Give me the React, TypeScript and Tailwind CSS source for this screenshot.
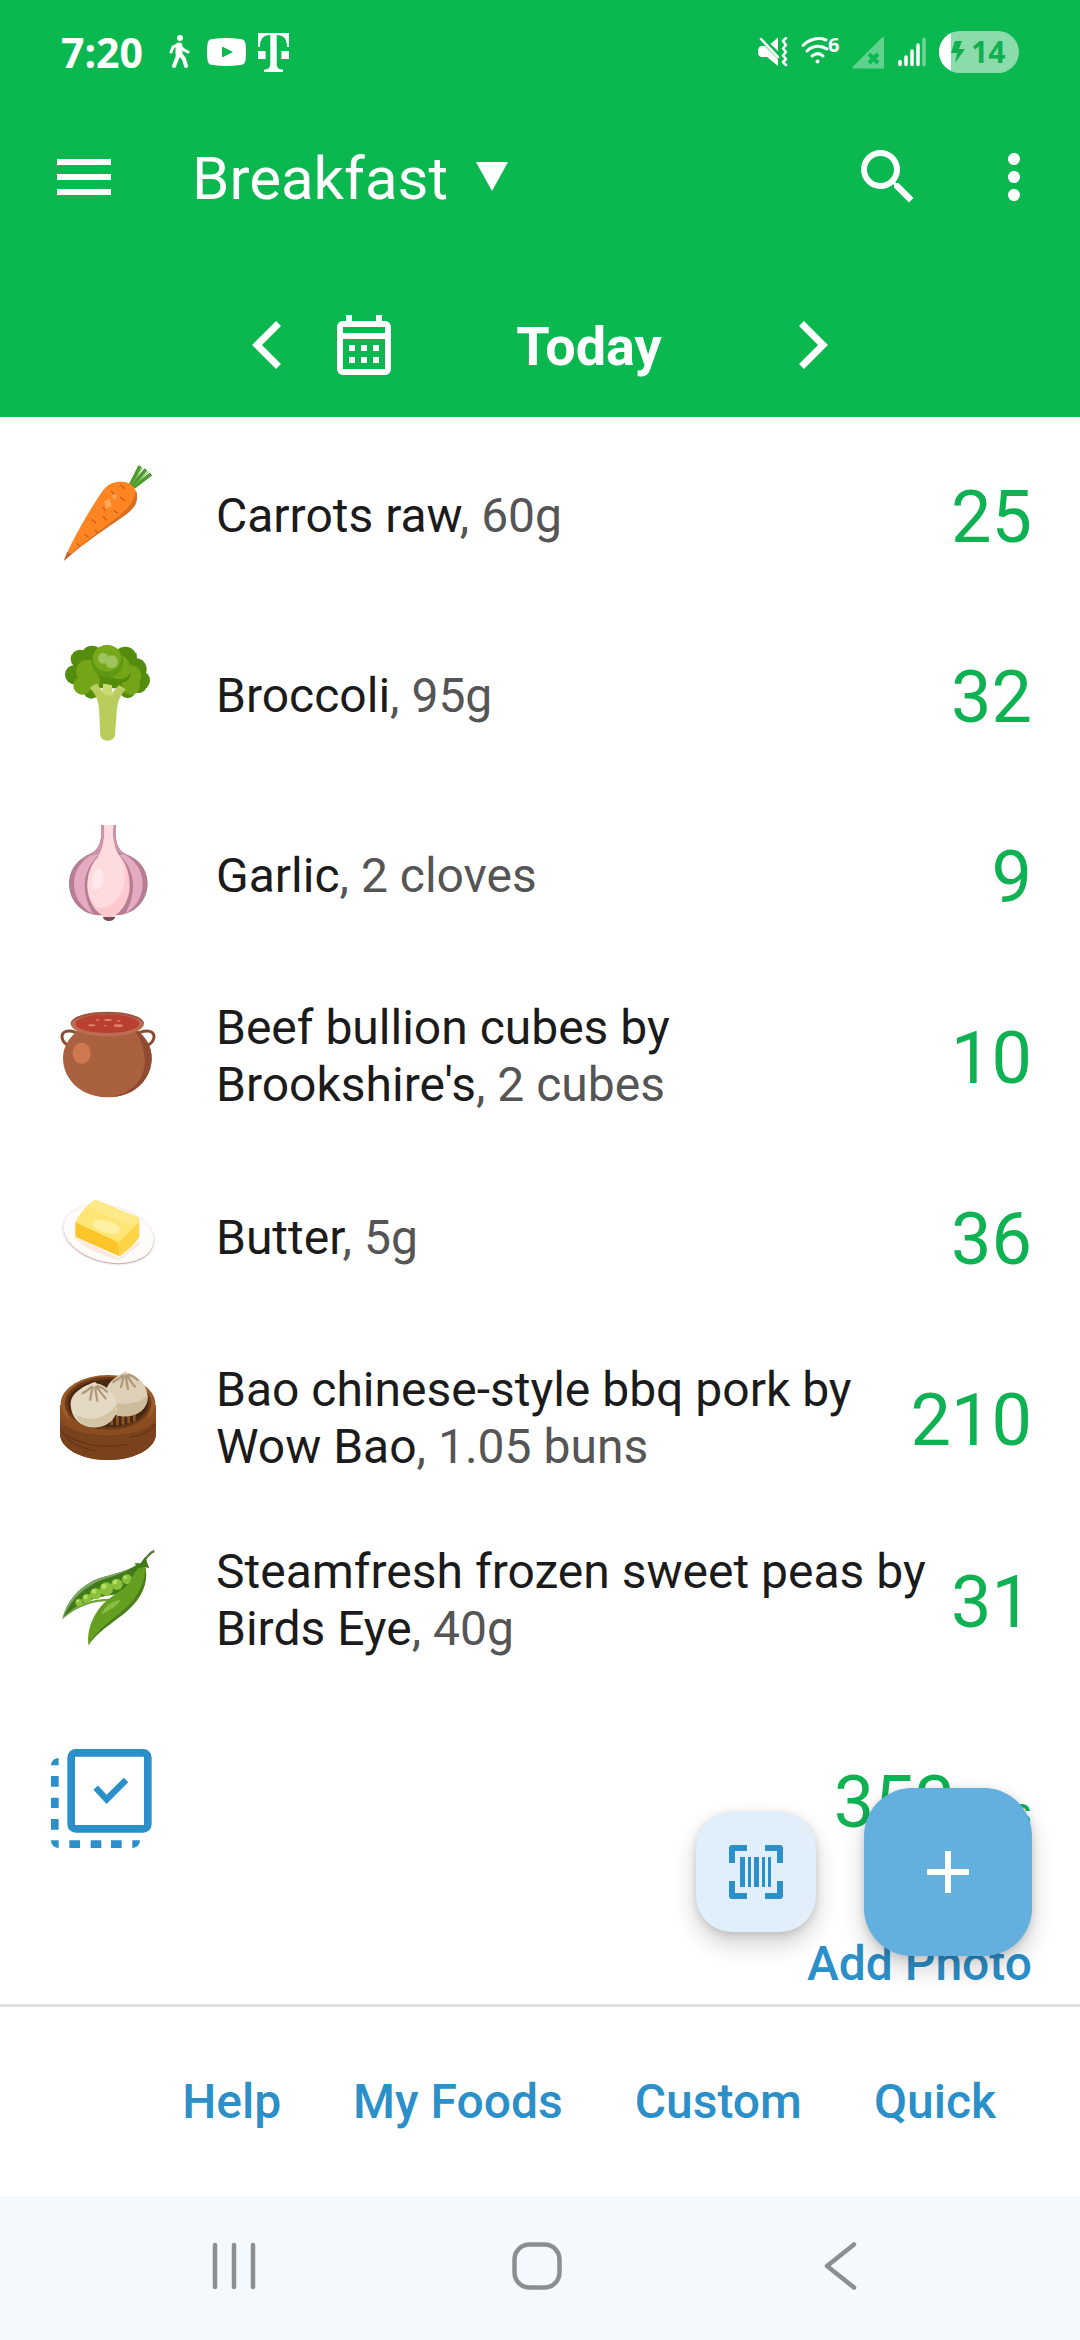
import type { ReactNode } from "react";
import {
  MdMenu,
  MdMoreVert,
  MdOutlineCalendarMonth,
  MdSearch,
} from "react-icons/md";

const Carrot = () => (
  <svg className="w-24 h-24" viewBox="90 75 288 288" fill="none">
    <path d="M300 138 330 78M306 138 348 88M311 142 363 102" stroke="#4f9a2c" strokeWidth="11" />
    <path d="M306 134 337 82M312 137 356 94" stroke="#71b94a" strokeWidth="3" />
    <path d="M102 362C120 310 190 190 222 148c15-19 32-24 56-23 28 1 45 24 43 50-2 22-22 38-48 56C220 266 150 318 102 362Z" fill="#ff8522" />
    <path d="M102 362c45-46 110-90 152-124 40-32 55-48 64-86 6 18 3 38-7 50-12 16-40 34-58 46-50 35-100 68-151 114Z" fill="#d96d20" />
    <path d="M102 362 112 335l13 8Z" fill="#b96a35" />
    <path d="m222 184 18-8 5 22-16 10ZM246 166l12-4 2 12-10 6Z" fill="#ffa657" />
    <path d="m270 134 16 12M243 153l10 10M271 171l14 12M216 200l11 13M251 212l13 8M186 238l12 12M219 229l11 11M163 282l13 10M193 270l10 8M140 310l8 8" stroke="#c9621c" strokeWidth="4" />
  </svg>
);

const Broccoli = () => (
  <svg className="w-24 h-24" viewBox="90 615 288 288">
    <g fill="#548c0c">
      <circle cx="134" cy="704" r="29" />
      <circle cx="150" cy="657" r="28" />
      <circle cx="186" cy="650" r="33" />
      <circle cx="286" cy="654" r="34" />
      <circle cx="318" cy="687" r="32" />
      <circle cx="331" cy="721" r="29" />
      <circle cx="326" cy="735" r="24" />
      <circle cx="293" cy="750" r="24" />
      <circle cx="184" cy="752" r="24" />
      <path d="M150 640H320V745H150Z" />
    </g>
    <g fill="#74a418">
      <circle cx="172" cy="693" r="34" />
      <circle cx="157" cy="737" r="27" />
      <circle cx="304" cy="706" r="30" />
      <circle cx="303" cy="738" r="27" />
      <circle cx="185" cy="725" r="26" />
      <circle cx="262" cy="682" r="38" />
    </g>
    <circle cx="232" cy="664" r="48" fill="#5f9612" />
    <ellipse cx="231" cy="655" rx="42" ry="40" fill="#78a81b" />
    <path d="M245 712c28 12 48 3 58-16 0 28-24 40-58 28Z" fill="#548c0c" />
    <circle cx="220" cy="655" r="16" fill="#9fc45f" />
    <circle cx="245" cy="665" r="19" fill="#9fc45f" />
    <path d="m179 743 21-13 17 25 3-24 26 5-1 24 22-25 20 13c-17 20-25 38-27 70l-5 67c-1 10-10 17-22 17s-22-7-22-17l-4-80c-2-27-12-45-28-62Z" fill="#b8cd5b" />
    <path d="m200 730 17 25 3-24 26 5-1 24 16-18c-8 14-13 19-14 28-7-5-12-6-18-2-10-11-21-21-29-38Z" fill="#c9db75" />
  </svg>
);

const Garlic = () => (
  <svg className="w-24 h-24" viewBox="90 75 288 288">
    <path d="M218 350h38c-3 9-9 13-19 13s-16-4-19-13Z" fill="#7d4b55" />
    <path d="M213 75h45c-3 38 0 74 30 88 36 12 65 44 65 87 0 53-40 95-93 96h-48c-54 0-95-42-95-95 0-46 32-77 62-89 32-13 38-48 34-87Z" fill="#b57e93" />
    <path d="M186 163c-30 20-54 45-54 88 0 40 23 74 58 91-13-20-26-50-26-86 0-36 18-68 44-93-6-3-14-2-22 0ZM284 163c31 20 54 45 54 88 0 40-22 72-52 90 13-25 23-52 23-86 0-34-16-67-41-90 6-3 10-3 16-2Z" fill="#e3aac0" />
    <path d="M214 75h8c2 48 0 69-16 87-22 10-40 2-50 18 36-19 62-29 58-105ZM249 75h8c-3 40 0 73 33 88-18 3-30-8-38-36Z" fill="#cf94ab" />
    <path d="M222 75h28c-4 37 3 74 24 98 15 22 25 47 25 85 0 43-28 92-62 92-35 0-65-45-65-92 0-38 12-65 30-85 16-25 24-61 20-98Z" fill="#fcc9ce" />
    <path d="M222 75h28c-4 38 2 72 20 99 14 22 17 42 14 69-4 44-40 84-78 82-20-13-33-39-33-67 0-38 12-65 30-85 16-25 23-61 19-98Z" fill="#fedbdf" />
    <ellipse cx="204" cy="237" rx="17" ry="32" fill="#ffe9eb" transform="rotate(8 204 237)" />
  </svg>
);

const Pot = () => (
  <svg className="w-24 h-24" viewBox="90 615 288 288" fill="none">
    <path d="M137 694c-22-8-41-4-41 13 0 11 7 19 16 25M330 694c22-8 42-4 42 13 0 11-8 19-17 25" stroke="#8a4b31" strokeWidth="9" strokeLinecap="round" />
    <path d="M142 690h182c25 22 41 47 41 81 0 66-55 118-132 118S99 837 99 771c0-34 17-59 43-81Z" fill="#aa6140" />
    <path d="M314 690h10c25 22 41 47 41 81 0 62-48 112-117 117 64-16 96-55 96-107 0-40-13-70-30-91Z" fill="#8f4a2f" />
    <ellipse cx="155" cy="757" rx="27" ry="32" fill="#cf7850" />
    <ellipse cx="232" cy="669" rx="110" ry="37" fill="#bd6c54" />
    <path d="M122 669c0-48 220-48 220 0-20-40-200-40-220 0Z" fill="#9c5540" />
    <ellipse cx="232" cy="668" rx="96" ry="28" fill="#b93f33" />
    <g fill="#e08368">
      <ellipse cx="234" cy="657" rx="12" ry="3" />
      <ellipse cx="185" cy="673" rx="11" ry="3" />
      <ellipse cx="265" cy="674" rx="14" ry="4" />
      <ellipse cx="203" cy="657" rx="6" ry="2" />
      <ellipse cx="226" cy="674" rx="5" ry="2" />
      <ellipse cx="266" cy="660" rx="6" ry="2" />
    </g>
  </svg>
);

const Butter = () => (
  <svg className="w-24 h-24" viewBox="90 51 288 288">
    <ellipse cx="235" cy="194" rx="144" ry="89" fill="#f3f1f5" transform="rotate(13 235 194)" />
    <ellipse cx="236" cy="195" rx="137" ry="84" fill="#cfa9a5" transform="rotate(13 236 195)" />
    <ellipse cx="236" cy="192" rx="137" ry="84" fill="#fefbfb" transform="rotate(13 236 192)" />
    <path d="m134 200 135 64 63-55-5 17-57 45c-48-14-112-34-136-71Z" fill="#fbe9df" />
    <path d="m136 156 129 59 3 44-132-59Z" fill="#fdc52a" />
    <path d="m265 215 63-59v44c-14 24-38 44-60 59Z" fill="#fdd445" />
    <path d="M136 156c12-24 34-50 54-64 6-3 10-1 16 1l118 48c4 2 5 8 4 15l-63 61Z" fill="#fee575" />
    <path d="m190 92 134 48-20 29-130-58Z" fill="#feea88" />
    <ellipse cx="229" cy="170" rx="43" ry="18" fill="#fff1a3" transform="rotate(15 229 170)" />
  </svg>
);

const Bao = () => (
  <svg className="w-24 h-24" viewBox="90 594 288 288" fill="none">
    <path d="M90 705h288v86c0 44-64 79-144 79S90 835 90 791Z" fill="#8a4c20" />
    <path d="M90 752c50 58 238 58 288 0v39c0 44-64 79-144 79S90 835 90 791Z" fill="#7a421c" />
    <path d="M92 780c30 40 130 60 200 42M300 802c35-5 65-22 77-40M105 800c20 20 55 36 90 42" stroke="#5d3014" strokeWidth="3" />
    <ellipse cx="234" cy="701" rx="142" ry="86" fill="#9a5a2a" />
    <ellipse cx="234" cy="700" rx="130" ry="80" fill="#6b3a18" />
    <ellipse cx="234" cy="700" rx="121" ry="72" fill="#4b2811" />
    <path d="M110 722c25 76 220 78 248-3 2 70-80 74-124 74s-116-15-124-71Z" fill="#8a4c20" />
    <path d="M245 738v28M262 734v32M279 734v30M296 732v28M313 728v26" stroke="#8d5526" strokeWidth="8" />
    <path d="M228 660c8-28 35-42 55-54 4-3 6-1 8 3 35 8 62 38 62 72 0 36-30 58-70 58-45 0-65-35-55-79Z" fill="#ddd0b6" />
    <path d="M262 700c35 5 65-2 91-22 0 38-30 61-70 61-15 0-25-4-33-9Z" fill="#cdbc9c" />
    <path d="M122 702c0-32 35-52 66-64 5-3 8-2 11 2 36 8 62 36 62 70 0 38-31 62-70 62-40 0-69-30-69-70Z" fill="#e4d9c2" />
    <path d="M137 735c35 17 75 15 105-12 10-8 15-18 18-25 4 45-26 74-69 74-24 0-44-14-54-37Z" fill="#d3c4a6" />
    <path d="M184 651c-8 9-18 13-26 19M188 652c-3 14-7 25-7 37M196 652c1 16 4 28 6 40M201 650c5 12 16 24 26 35M203 648c12 5 20 8 28 17M277 617c-8 10-18 12-27 19M281 617c-2 14-6 24-8 34M288 617c1 16 3 28 6 40M293 616c4 12 13 24 22 34M296 614c12 4 20 9 27 16" stroke="#b09a79" strokeWidth="7" strokeLinecap="round" />
  </svg>
);

const Peas = () => (
  <svg className="w-24 h-24" viewBox="90 90 288 288" fill="none">
    <path d="M373 93c-14 3-25 21-37 38" stroke="#5c7a42" strokeWidth="7" />
    <path d="M97 298c12-50 45-92 95-117 35-16 95-22 130-48l22-2-70 90c-60 6-130 20-177 77Z" fill="#417a1a" />
    <path d="M97 298c9-45 45-92 95-117 35-16 80-20 112-38-30 23-76 28-108 45-46 24-75 56-99 110Z" fill="#7fa564" />
    <path d="M97 298c32-42 82-62 145-62l-8 7c-50 2-95 17-137 55Z" fill="#6fa342" />
    <g fill="#8bc13a">
      <circle cx="147" cy="247" r="11" />
      <circle cx="171" cy="236" r="14" />
      <circle cx="197" cy="221" r="17" />
      <circle cx="229" cy="207" r="20" />
      <circle cx="261" cy="193" r="17" />
      <circle cx="291" cy="178" r="15" />
    </g>
    <g fill="#b7dd62">
      <circle cx="144" cy="243" r="4" />
      <circle cx="167" cy="231" r="6" />
      <circle cx="192" cy="214" r="7" />
      <circle cx="222" cy="199" r="8" />
      <circle cx="255" cy="186" r="7" />
      <circle cx="286" cy="172" r="5" />
    </g>
    <path d="M176 377c-8-45 15-105 60-140 35-26 55-33 68-60 8-19 22-37 40-46 14 45-3 87-35 122-38 42-110 80-133 124Z" fill="#649f22" />
    <path d="M176 377c26-60 108-95 142-148 20-30 28-60 28-88 8 45-7 82-37 115-38 42-110 77-133 121Z" fill="#477f1a" />
    <path d="M215 284c8-25 32-42 56-44-10 20-34 30-56 44Z" fill="#87bf42" />
    <path d="m312 130 20 0 14-20 6 20 6 15-13-4-15 2Z" fill="#417a1a" />
  </svg>
);

const foods: { icon: ReactNode; name: string; amount: string; cals: number }[] = [
  { icon: <Carrot />, name: "Carrots raw", amount: "60g", cals: 25 },
  { icon: <Broccoli />, name: "Broccoli", amount: "95g", cals: 32 },
  { icon: <Garlic />, name: "Garlic", amount: "2 cloves", cals: 9 },
  { icon: <Pot />, name: "Beef bullion cubes by Brookshire's", amount: "2 cubes", cals: 10 },
  { icon: <Butter />, name: "Butter", amount: "5g", cals: 36 },
  { icon: <Bao />, name: "Bao chinese-style bbq pork by Wow Bao", amount: "1.05 buns", cals: 210 },
  { icon: <Peas />, name: "Steamfresh frozen sweet peas by Birds Eye", amount: "40g", cals: 31 },
];

const StatusBar = () => (
  <div className="flex items-center justify-between h-[104px] px-[61px] font-['Noto_Sans',sans-serif]">
    <div className="flex items-center">
      <span className="text-[41px] leading-none font-bold">7:20</span>
      <svg className="ml-[26px] w-[22px] h-[34px]" viewBox="0 0 22 34" fill="none" stroke="currentColor" strokeLinecap="round" strokeLinejoin="round">
        <circle cx="11" cy="3" r="3" fill="currentColor" stroke="none" />
        <path d="M10 11v8" strokeWidth="7" />
        <path d="M8 10 4 12 2 17M13 13l2 2 4 2" strokeWidth="3" />
        <path d="M9 21 5 31M12 20l3 4 2 7" strokeWidth="4" />
      </svg>
      <svg className="ml-4 w-[39px] h-7" viewBox="0 0 39 28">
        <path fillRule="evenodd" fill="currentColor" d="M6 1Q19 -1 33 1Q38 1 38.500 6Q39.500 14 38.500 22Q38 27 33 27Q19 29 6 27Q1 27 .5 22Q-.5 14 .5 6Q1 1 6 1ZM15 8.500V19.500L26 14Z" />
      </svg>
      <svg className="ml-3 w-[31px] h-[39px]" viewBox="0 0 31 39" fill="currentColor">
        <path d="M0 0H31V14H29C29 6 26 2 18.700 2V30c0 5 2 6.500 6.300 6.500V39H6v-2.500c4.300 0 6.300-1.500 6.300-6.500V2C5 2 2 6 2 14H0Z" />
        <path d="M0 18h7.600v8H0ZM23.400 18H31v8h-7.600Z" />
      </svg>
    </div>

    <div className="flex items-center gap-[13px]">
      <svg className="w-[30px] h-[30px]" viewBox="0 0 30 30" fill="none" stroke="currentColor" strokeWidth="2.500" strokeLinecap="round" strokeLinejoin="round">
        <path d="M4 9H7L20 22V29L9 20H4Q0 20 0 14.500Q0 9 4 9ZM20 .5V14L12.500 7Z" fill="currentColor" stroke="none" />
        <path d="M3 2 20 20" />
        <path d="M28 1l-3 3 3 4-3 3.500 3 3.500-3 3.500 3 3.500-3 3 3 3" />
      </svg>
      <svg className="w-[38px] h-[30px] overflow-visible" viewBox="0 0 38 30" fill="none" stroke="currentColor" strokeWidth="3" strokeLinecap="round">
        <path d="M2 8.500C8 2 17 0 25 3M6 14c6-6 14-6 20-2M11 19c4-3 8-3 11 0" />
        <circle cx="16.500" cy="24.500" r="2" fill="currentColor" stroke="none" />
        <text x="27" y="15" fontSize="20" fontWeight="700" fill="currentColor" stroke="none">6</text>
      </svg>
      <svg className="w-[33px] h-[33px]" viewBox="0 0 33 33" fill="none">
        <path d="M31 2V31.500H1.500Z" fill="#5fd28d" stroke="#5fd28d" strokeWidth="2" strokeLinejoin="round" />
        <path d="m17 18 9 9M26 18l-9 9" stroke="#0bb850" strokeWidth="4" />
      </svg>
      <svg className="w-7 h-[30px]" viewBox="0 0 28 30" stroke="currentColor" strokeWidth="3.500" strokeLinecap="round">
        <path d="M2 24.500v3M8 20v7.500M14 14v13.500M20 8v19.500" />
        <path d="M26 2.500v25" opacity=".4" />
      </svg>
      <div className="flex items-center w-20 h-[42px] rounded-full overflow-hidden bg-[#8bdcab] text-[#0fb04f]">
        <span className="w-3 h-full bg-white" />
        <svg className="w-[14px] h-[22px]" viewBox="0 0 14 22" fill="currentColor">
          <path d="M4 0h7L8 8h6L4 22 6 12H0Z" />
        </svg>
        <span className="ml-1.5 text-[30px] leading-none font-bold">14</span>
      </div>
    </div>
  </div>
);

const Header = () => (
  <header className="bg-[#0bb850] text-white">
    <StatusBar />
    <div className="flex items-center h-[145px] pl-12 pr-[30px] mb-6">
      <button aria-label="Menu"><MdMenu className="w-[72px] h-[72px]" /></button>
      <button className="ml-[72px] flex items-center gap-7 text-[60px] leading-none">
        <span className="pt-1">Breakfast</span>
        <svg className="w-8 h-[29px]" viewBox="0 0 32 29" fill="currentColor"><path d="M0 0H32L16 29Z" /></svg>
      </button>
      <div className="ml-auto flex gap-[54px]">
        <button aria-label="Search"><MdSearch className="w-[72px] h-[72px]" /></button>
        <button aria-label="More options"><MdMoreVert className="w-[72px] h-[72px]" /></button>
      </div>
    </div>
    <div className="flex items-center justify-center h-36">
      <button aria-label="Previous day">
        <svg className="w-[30px] h-12" viewBox="0 0 30 48" fill="none" stroke="currentColor" strokeWidth="7"><path d="M26.500 2.500 5 24 26.500 45.500" /></svg>
      </button>
      <button aria-label="Pick a date" className="ml-[46px]"><MdOutlineCalendarMonth className="w-[72px] h-[72px]" /></button>
      <h1 className="w-[378px] mr-5 pt-1 text-center text-[54px] leading-none font-bold">Today</h1>
      <button aria-label="Next day">
        <svg className="w-[30px] h-12" viewBox="0 0 30 48" fill="none" stroke="currentColor" strokeWidth="7"><path d="M3.500 2.500 25 24 3.500 45.500" /></svg>
      </button>
    </div>
  </header>
);

const App = () => {
  return (
    <div className="min-h-screen flex flex-col bg-white font-[Roboto,sans-serif] text-[#1b1b1b]">
      <Header />

      <main className="relative flex-1 pt-2.5">
        <ul>
          {foods.map((food) => (
            <li key={food.name} className="flex items-center min-h-[180px] pl-[60px] pr-12 py-8">
              <div className="shrink-0 mb-2">{food.icon}</div>
              <p className="ml-[60px] mr-4 flex-1 pb-1 text-5xl leading-[57px]">
                {food.name}
                <span className="text-[#555]">, {food.amount}</span>
              </p>
              <span className="pt-0.5 text-[72px] leading-[72px] text-[#0fb252]">{food.cals}</span>
            </li>
          ))}
        </ul>

        <div className="flex items-center justify-between pl-[51px] pr-12 pt-14">
          <button aria-label="Select all">
            <svg className="w-[101px] h-[99px]" viewBox="63 687 303 297" fill="none" stroke="#2b8fc9">
              <rect x="123.500" y="698.500" width="230" height="228" rx="14" strokeWidth="23" />
              <path d="M197 803 230 838 288 780" strokeWidth="19" />
              <path d="M63 736c0-12 10-22 23-22v22ZM63 768h23v32H63ZM63 833h23v31H63ZM63 897h23v32H63ZM63 961h23v23c-13 0-23-10-23-23ZM118 961h32v23h-32ZM182 961h32v23h-32ZM243 961h32v23h-32ZM307 961h23c0 13-10 23-23 23Z" fill="#2b8fc9" stroke="none" />
            </svg>
          </button>
          <p className="pt-2 text-[72px] leading-[72px] text-[#0fb252]">
            353<span className="text-[42px] leading-none">cals</span>
          </p>
        </div>
        <div className="flex justify-end px-12 mt-[88px] mb-3">
          <button className="text-5xl leading-[56px] font-medium text-[#2b8fc9]">Add Photo</button>
        </div>

        {/* FLOATING BUTTONS */}
        <div className="absolute right-12 bottom-12 flex items-center gap-12">
          <button aria-label="Scan barcode" className="w-[120px] h-[120px] rounded-[36px] bg-[#e0effa] flex items-center justify-center shadow-[0_12px_24px_rgba(0,0,0,0.18),0_2px_8px_rgba(0,0,0,0.14)]">
            <svg className="w-[54px] h-[54px]" viewBox="0 0 54 54" fill="#2b8fc9">
              <path d="M18 3H3V18M36 3H51V18M18 51H3V36M36 51H51V36" fill="none" stroke="#2b8fc9" strokeWidth="6" strokeLinejoin="round" />
              <path d="M11 12h5v30h-5ZM19 12h3v30h-3ZM25 12h5v30h-5ZM33 12h3v30h-3ZM39 12h3v30h-3Z" />
            </svg>
          </button>
          <button aria-label="Add food" className="w-[168px] h-[168px] rounded-[48px] bg-[#63afdd] flex items-center justify-center shadow-[0_12px_24px_rgba(0,0,0,0.18),0_2px_8px_rgba(0,0,0,0.14)]">
            <svg className="w-[42px] h-[42px]" viewBox="0 0 42 42" stroke="white" strokeWidth="6"><path d="M21 0v42M0 21h42" /></svg>
          </button>
        </div>
      </main>

      <footer>
        <div className="flex items-center justify-end gap-[72px] h-48 border-t-[3px] border-[#e0e0e0] pr-[84px] text-5xl font-medium text-[#2b8fc9]">
          <button>Help</button>
          <button>My Foods</button>
          <button>Custom</button>
          <button>Quick</button>
        </div>
        <div className="flex items-center justify-between h-36 pl-[210px] pr-[216px] pb-1 bg-[#f4f9fd] text-[#8b8f91]">
          <button aria-label="Recent apps">
            <svg className="w-12 h-12" viewBox="0 0 48 48" stroke="currentColor" strokeWidth="4.500" strokeLinecap="round"><path d="M5 3v42M24 3v42M43 3v42" /></svg>
          </button>
          <button aria-label="Home">
            <svg className="w-[50px] h-12" viewBox="0 0 50 48" fill="none" stroke="currentColor" strokeWidth="4.500"><rect x="2.500" y="2.500" width="45" height="43" rx="15" /></svg>
          </button>
          <button aria-label="Back">
            <svg className="w-12 h-12" viewBox="0 0 48 48" fill="none" stroke="currentColor" strokeWidth="4.500" strokeLinecap="round" strokeLinejoin="round"><path d="M38 2.500 11 24 38 45.500" /></svg>
          </button>
        </div>
      </footer>
    </div>
  );
};

export default App;
